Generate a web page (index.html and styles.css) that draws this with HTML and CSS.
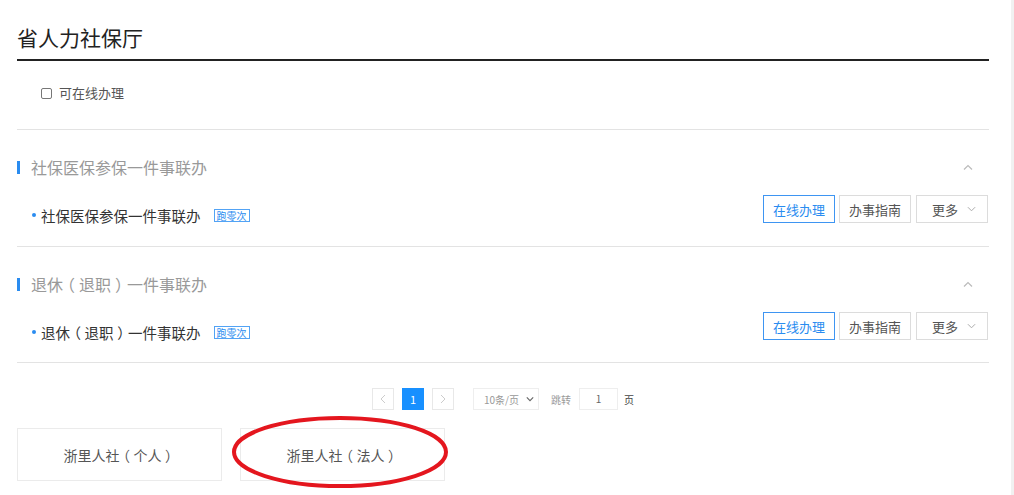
FILE: index.html
```html
<!DOCTYPE html>
<html lang="zh-CN">
<head>
  <meta charset="UTF-8">
  <title>省人力社保厅</title>
  <link rel="stylesheet" href="styles.css">
</head>
<body>
  <div class="page">
    <!-- 标题 -->
    <div class="dept-head">省人力社保厅</div>

    <!-- 筛选 -->
    <div class="filter">
      <label class="check"><input type="checkbox"> 可在线办理</label>
    </div>

    <!-- 事项列表 -->
    <div class="group">
      <div class="group-title">
        <span class="bar"></span>
        <span class="name">社保医保参保一件事联办</span>
        <svg class="fold" viewBox="0 0 10 6" width="10" height="6"><path d="M1 5.5 5 1.5 9 5.5" fill="none" stroke="#bbb" stroke-width="1.2"/></svg>
      </div>
      <div class="item">
        <div class="item-name"><i class="dot"></i>社保医保参保一件事联办<span class="tag">跑零次</span></div>
        <div class="ops">
          <a class="op primary">在线办理</a>
          <a class="op">办事指南</a>
          <a class="op more">更多<svg viewBox="0 0 10 6" width="9" height="6"><path d="M1 1 5 5 9 1" fill="none" stroke="#aaa" stroke-width="1.1"/></svg></a>
        </div>
      </div>
    </div>

    <div class="group">
      <div class="group-title">
        <span class="bar"></span>
        <span class="name">退休<span class="paren">（</span>退职<span class="paren">）</span>一件事联办</span>
        <svg class="fold" viewBox="0 0 10 6" width="10" height="6"><path d="M1 5.5 5 1.5 9 5.5" fill="none" stroke="#bbb" stroke-width="1.2"/></svg>
      </div>
      <div class="item">
        <div class="item-name"><i class="dot"></i>退休<span class="paren">（</span>退职<span class="paren">）</span>一件事联办<span class="tag">跑零次</span></div>
        <div class="ops">
          <a class="op primary">在线办理</a>
          <a class="op">办事指南</a>
          <a class="op more">更多<svg viewBox="0 0 10 6" width="9" height="6"><path d="M1 1 5 5 9 1" fill="none" stroke="#aaa" stroke-width="1.1"/></svg></a>
        </div>
      </div>
    </div>

    <!-- 分页 -->
    <div class="pager">
      <span class="pg"><svg viewBox="0 0 6 10" width="6" height="10"><path d="M5 1 1 5 5 9" fill="none" stroke="#ccc" stroke-width="1"/></svg></span>
      <span class="pg active">1</span>
      <span class="pg"><svg viewBox="0 0 6 10" width="6" height="10"><path d="M1 1 5 5 1 9" fill="none" stroke="#ccc" stroke-width="1"/></svg></span>
      <span class="size">10条/页<svg viewBox="0 0 10 6" width="8" height="6"><path d="M1 1 5 5 9 1" fill="none" stroke="#666" stroke-width="1.4"/></svg></span>
      <span class="jump">跳转</span>
      <span class="jump-box">1</span>
      <span class="unit">页</span>
    </div>

    <!-- 入口卡片 -->
    <div class="portals">
      <div class="portal">浙里人社<span class="paren">（</span>个人<span class="paren">）</span></div>
      <div class="portal">浙里人社<span class="paren">（</span>法人<span class="paren">）</span></div>
      <svg class="mark" viewBox="0 0 220 74" width="220" height="74"><ellipse cx="110" cy="37" rx="106" ry="34" fill="none" stroke="#e4161e" stroke-width="4"/></svg>
    </div>
  </div>
  <div class="scroll-edge"></div>
</body>
</html>
```

FILE: styles.css
```css
/* 基本样式 */
body {
  margin: 0;
  display: flex;
  min-height: 495px;
  font-family: "Noto Sans CJK SC", "Liberation Sans", sans-serif;
  color: #333;
  background: #fff;
  overflow: hidden;
}

.page {
  flex: 1;
  padding: 0 22px 0 17px;
}

.scroll-edge {
  width: 3px;
  background: #f1f1f1;
}

/* 全角括号居中显示：先取半宽字形，再两侧补白 */
.paren {
  font-feature-settings: "halt";
  padding: 0 0.25em;
}

/* 标题 */
.dept-head {
  padding: 23px 0 8px;
  font-size: 21px;
  line-height: 28px;
  color: #222;
  border-bottom: 2px solid #222;
}

/* 筛选 */
.filter {
  padding: 22px 0 26px 24px;
  border-bottom: 1px solid #e3e3e3;
}

.check {
  display: flex;
  align-items: center;
  gap: 7px;
  font-size: 13px;
  line-height: 20px;
  color: #555;
}

.check input {
  appearance: none;
  margin: 0;
  width: 11px;
  height: 11px;
  border: 1px solid #777;
  border-radius: 2px;
}

/* 事项分组 */
.group {
  padding: 25px 0 23px;
  border-bottom: 1px solid #e3e3e3;
}

.group + .group {
  padding-bottom: 22px;
}

.group-title {
  display: flex;
  align-items: center;
  height: 24px;
}

.group-title .bar {
  width: 3px;
  height: 13px;
  background: #2a8cf0;
}

.group-title .name {
  margin-left: 11px;
  font-size: 16px;
  color: #999;
}

.group-title .fold {
  margin-left: auto;
  margin-right: 16px;
}

.item {
  display: flex;
  justify-content: space-between;
  margin-top: 16px;
  height: 28px;
}

.item-name {
  display: flex;
  align-items: center;
  padding: 12px 0 0 15px;
  height: 16px;
  font-size: 14.5px;
  color: #333;
}

.dot {
  width: 4px;
  height: 4px;
  margin-right: 5px;
  border-radius: 50%;
  background: #2a8cf0;
}

.tag {
  margin-left: 13px;
  padding: 0 2px;
  border: 1px solid #52a3f5;
  font-size: 10px;
  line-height: 11px;
  color: #2a8cf0;
}

.ops {
  display: flex;
  gap: 4px;
  margin-right: 1px;
}

.op {
  box-sizing: border-box;
  display: flex;
  align-items: center;
  justify-content: center;
  width: 72px;
  height: 28px;
  border: 1px solid #dcdcdc;
  font-size: 13px;
  color: #555;
}

.op.primary {
  border-color: #3e95f2;
  color: #2a8cf0;
}

.op.more {
  margin-left: 1px;
  gap: 9px;
  padding-left: 4px;
}

/* 分页 */
.pager {
  display: flex;
  align-items: center;
  justify-content: center;
  margin-top: 25px;
  height: 22px;
  font-size: 10px;
  color: #999;
}

.pg {
  box-sizing: border-box;
  display: flex;
  align-items: center;
  justify-content: center;
  width: 22px;
  height: 22px;
  margin-right: 8px;
  border: 1px solid #e8e8e8;
}

.pg.active {
  border-color: #1890ff;
  background: #1890ff;
  color: #fff;
  font-size: 11px;
}

.size {
  box-sizing: border-box;
  display: flex;
  align-items: center;
  gap: 7px;
  width: 66px;
  height: 22px;
  margin-left: 11px;
  padding-left: 10px;
  border: 1px solid #eee;
}

.jump {
  margin-left: 12px;
}

.jump-box {
  box-sizing: border-box;
  width: 39px;
  height: 22px;
  margin-left: 8px;
  border: 1px solid #eee;
  line-height: 20px;
  text-align: center;
  color: #666;
}

.unit {
  margin-left: 6px;
  color: #444;
}

/* 入口卡片 */
.portals {
  position: relative;
  display: flex;
  gap: 18px;
  margin-top: 18px;
}

.portal {
  box-sizing: border-box;
  width: 205px;
  height: 53px;
  border: 1px solid #ebebeb;
  display: flex;
  align-items: center;
  justify-content: center;
  font-size: 14px;
  color: #555;
}

/* 红圈标注 */
.mark {
  position: absolute;
  left: 213px;
  top: -13px;
}
```
